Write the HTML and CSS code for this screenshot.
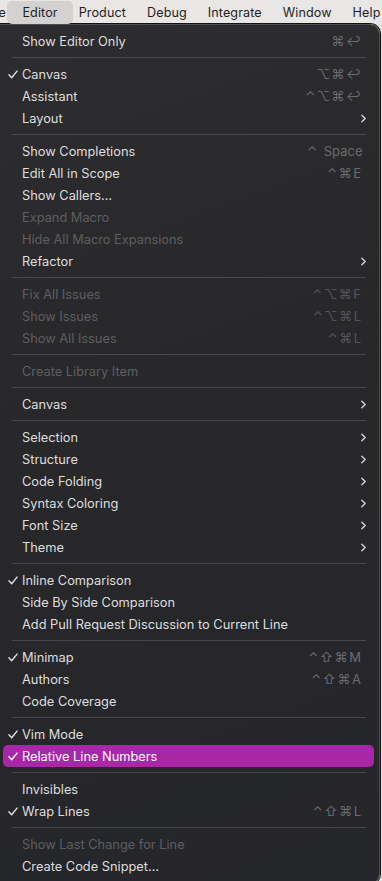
FILE: index.html
```html
<!DOCTYPE html>
<html lang="en">
<head>
    <meta charset="UTF-8">
    <meta name="viewport" content="width=device-width, initial-scale=1.0">
    <title>Editor menu</title>
    <link rel="stylesheet" href="styles.css">
</head>
<body>
    <div class="menubar">
        <span class="bar-item first">e</span>
        <span class="bar-item active">Editor</span>
        <span class="bar-item">Product</span>
        <span class="bar-item">Debug</span>
        <span class="bar-item">Integrate</span>
        <span class="bar-item">Window</span>
        <span class="bar-item">Help</span>
    </div>

    <div class="menu">
        <div class="item"><span class="check"></span><span class="label">Show Editor Only</span><span class="keys">⌘↩</span></div>
        <div class="sep"></div>

        <div class="item"><span class="check on"><svg viewBox="0 0 11 10"><path d="M1 5.4 L4 8.6 L10 1.2"/></svg></span><span class="label">Canvas</span><span class="keys">⌥⌘↩</span></div>
        <div class="item"><span class="check"></span><span class="label">Assistant</span><span class="keys">⌃⌥⌘↩</span></div>
        <div class="item"><span class="check"></span><span class="label">Layout</span><span class="sub"><svg viewBox="0 0 6 10"><path d="M1 1 L5 5 L1 9"/></svg></span></div>
        <div class="sep"></div>

        <div class="item"><span class="check"></span><span class="label">Show Completions</span><span class="keys">⌃ <span class="word">Space</span></span></div>
        <div class="item"><span class="check"></span><span class="label">Edit All in Scope</span><span class="keys">⌃⌘E</span></div>
        <div class="item"><span class="check"></span><span class="label">Show Callers…</span></div>
        <div class="item disabled"><span class="check"></span><span class="label">Expand Macro</span></div>
        <div class="item disabled"><span class="check"></span><span class="label">Hide All Macro Expansions</span></div>
        <div class="item"><span class="check"></span><span class="label">Refactor</span><span class="sub"><svg viewBox="0 0 6 10"><path d="M1 1 L5 5 L1 9"/></svg></span></div>
        <div class="sep"></div>

        <div class="item disabled"><span class="check"></span><span class="label">Fix All Issues</span><span class="keys">⌃⌥⌘F</span></div>
        <div class="item disabled"><span class="check"></span><span class="label">Show Issues</span><span class="keys">⌃⌥⌘L</span></div>
        <div class="item disabled"><span class="check"></span><span class="label">Show All Issues</span><span class="keys">⌃⌘L</span></div>
        <div class="sep"></div>

        <div class="item disabled"><span class="check"></span><span class="label">Create Library Item</span></div>
        <div class="sep"></div>

        <div class="item"><span class="check"></span><span class="label">Canvas</span><span class="sub"><svg viewBox="0 0 6 10"><path d="M1 1 L5 5 L1 9"/></svg></span></div>
        <div class="sep"></div>

        <div class="item"><span class="check"></span><span class="label">Selection</span><span class="sub"><svg viewBox="0 0 6 10"><path d="M1 1 L5 5 L1 9"/></svg></span></div>
        <div class="item"><span class="check"></span><span class="label">Structure</span><span class="sub"><svg viewBox="0 0 6 10"><path d="M1 1 L5 5 L1 9"/></svg></span></div>
        <div class="item"><span class="check"></span><span class="label">Code Folding</span><span class="sub"><svg viewBox="0 0 6 10"><path d="M1 1 L5 5 L1 9"/></svg></span></div>
        <div class="item"><span class="check"></span><span class="label">Syntax Coloring</span><span class="sub"><svg viewBox="0 0 6 10"><path d="M1 1 L5 5 L1 9"/></svg></span></div>
        <div class="item"><span class="check"></span><span class="label">Font Size</span><span class="sub"><svg viewBox="0 0 6 10"><path d="M1 1 L5 5 L1 9"/></svg></span></div>
        <div class="item"><span class="check"></span><span class="label">Theme</span><span class="sub"><svg viewBox="0 0 6 10"><path d="M1 1 L5 5 L1 9"/></svg></span></div>
        <div class="sep"></div>

        <div class="item"><span class="check on"><svg viewBox="0 0 11 10"><path d="M1 5.4 L4 8.6 L10 1.2"/></svg></span><span class="label">Inline Comparison</span></div>
        <div class="item"><span class="check"></span><span class="label">Side By Side Comparison</span></div>
        <div class="item"><span class="check"></span><span class="label">Add Pull Request Discussion to Current Line</span></div>
        <div class="sep"></div>

        <div class="item"><span class="check on"><svg viewBox="0 0 11 10"><path d="M1 5.4 L4 8.6 L10 1.2"/></svg></span><span class="label">Minimap</span><span class="keys">⌃⇧⌘M</span></div>
        <div class="item"><span class="check"></span><span class="label">Authors</span><span class="keys">⌃⇧⌘A</span></div>
        <div class="item"><span class="check"></span><span class="label">Code Coverage</span></div>
        <div class="sep"></div>

        <div class="item"><span class="check on"><svg viewBox="0 0 11 10"><path d="M1 5.4 L4 8.6 L10 1.2"/></svg></span><span class="label">Vim Mode</span></div>
        <div class="item selected"><span class="check on"><svg viewBox="0 0 11 10"><path d="M1 5.4 L4 8.6 L10 1.2"/></svg></span><span class="label">Relative Line Numbers</span></div>
        <div class="sep"></div>

        <div class="item"><span class="check"></span><span class="label">Invisibles</span></div>
        <div class="item"><span class="check on"><svg viewBox="0 0 11 10"><path d="M1 5.4 L4 8.6 L10 1.2"/></svg></span><span class="label">Wrap Lines</span><span class="keys">⌃⇧⌘L</span></div>
        <div class="sep"></div>

        <div class="item disabled"><span class="check"></span><span class="label">Show Last Change for Line</span></div>
        <div class="item"><span class="check"></span><span class="label">Create Code Snippet…</span></div>
    </div>
</body>
</html>
```

FILE: styles.css
```css
* {
    margin: 0;
    padding: 0;
    box-sizing: border-box;
}

html, body {
    width: 100%;
    height: 100%;
    overflow: hidden;
}

body {
    background-color: #e4e2e0;
    font-family: Inter, "Noto Sans", "DejaVu Sans", sans-serif;
}

.menubar {
    display: flex;
    align-items: center;
    height: 24px;
    background-color: #e9e7e5;
    white-space: nowrap;
    font-size: 12.6px;
    letter-spacing: 0.1px;
    color: #1f1f1f;
}

.bar-item {
    height: 23px;
    line-height: 23px;
    padding: 0 10.5px;
}

.bar-item.first {
    margin-left: -12px;
    padding-right: 6px;
}

.bar-item.active {
    padding: 0 15px;
    margin: 0 -4.5px;
    border-radius: 5px;
    background-color: #d4d2d0;
}

.menu {
    width: 393px;
    margin-left: -13px;
    padding: 5px 0 6px;
    background: linear-gradient(160deg, #2d2c2e 0%, #28282a 40%, #25262a 100%);
    border: 1px solid #4f4f51;
    border-radius: 0 10px 10px 10px;
    box-shadow: 0 0 0 1px #111;
    color: #dedede;
    font-size: 12.8px;
}

.item {
    display: flex;
    align-items: center;
    height: 22px;
    margin: 0 5px 0 15px;
    padding: 0 13px 0 5px;
    border-radius: 5px;
    white-space: nowrap;
}

.item.disabled {
    color: #5e5e60;
}

.item.selected {
    background-color: #a727a8;
    color: #ffffff;
}

.check {
    width: 14px;
    flex-shrink: 0;
    display: flex;
    align-items: center;
}

.check svg {
    width: 10px;
    height: 9px;
    fill: none;
    stroke: currentColor;
    stroke-width: 1.6;
    stroke-linecap: round;
    stroke-linejoin: round;
}

.label {
    flex: 1;
}

.keys {
    color: #6b6b6d;
    font-family: Inter, "DejaVu Sans", sans-serif;
    font-size: 13px;
    letter-spacing: 1.5px;
    margin-right: -1.5px;
}

.keys .word {
    letter-spacing: 0;
}

.item.disabled .keys {
    color: #555557;
}

.sub {
    display: flex;
    align-items: center;
    margin-right: -5px;
}

.sub svg {
    width: 5px;
    height: 9px;
    fill: none;
    stroke: #d8d8d8;
    stroke-width: 1.6;
    stroke-linecap: round;
    stroke-linejoin: round;
}

.sep {
    height: 1px;
    margin: 5px 13px 5px 24px;
    background-color: #48484a;
}
```
